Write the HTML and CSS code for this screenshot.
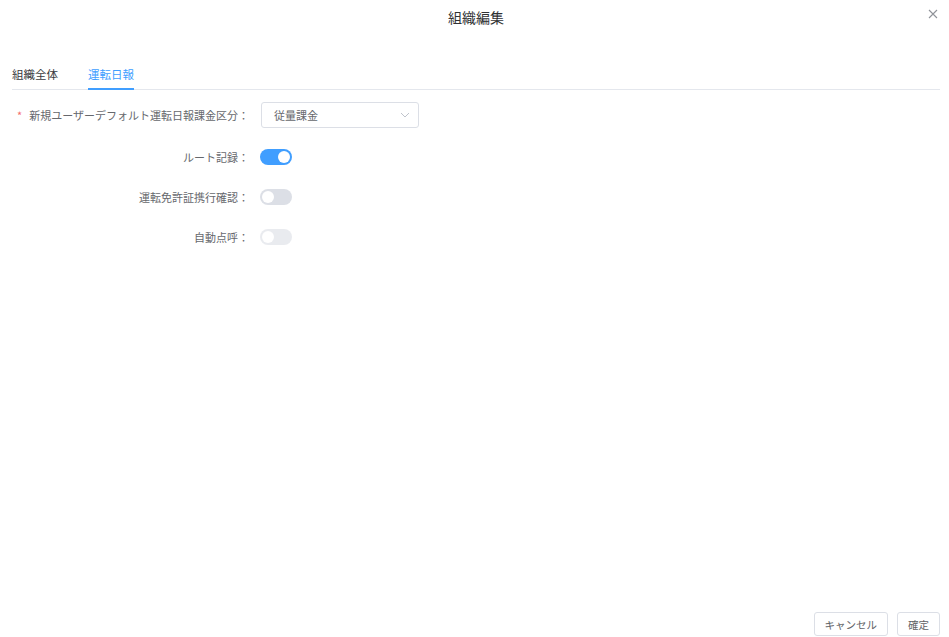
FILE: index.html
```html
<!DOCTYPE html>
<html lang="ja">
<head>
  <meta charset="UTF-8">
  <meta name="viewport" content="width=device-width, initial-scale=1.0">
  <title>組織編集</title>
  <link rel="stylesheet" href="styles.css">
</head>
<body>
  <div class="dialog">
    <header class="dialog-header">
      <span class="dialog-title">組織編集</span>
      <button class="dialog-close" type="button" aria-label="close">
        <svg width="10" height="10" viewBox="0 0 10 10"><path d="M1 1L9 9M9 1L1 9" stroke="#909399" stroke-width="1.1" fill="none"/></svg>
      </button>
    </header>

    <div class="dialog-body">
      <div class="tabs">
        <div class="tab">組織全体</div>
        <div class="tab active">運転日報</div>
      </div>

      <form class="form">
        <div class="form-item form-item-select">
          <label class="form-label"><span class="required">*</span>新規ユーザーデフォルト運転日報課金区分：</label>
          <div class="select">
            <span>従量課金</span>
            <svg width="10" height="6" viewBox="0 0 10 6"><path d="M1 1L5 5L9 1" stroke="#c0c4cc" stroke-width="1" fill="none"/></svg>
          </div>
        </div>
        <div class="form-item">
          <label class="form-label">ルート記録：</label>
          <span class="switch on"></span>
        </div>
        <div class="form-item">
          <label class="form-label">運転免許証携行確認：</label>
          <span class="switch"></span>
        </div>
        <div class="form-item">
          <label class="form-label">自動点呼：</label>
          <span class="switch disabled"></span>
        </div>
      </form>
    </div>

    <footer class="dialog-footer">
      <button class="btn" type="button">キャンセル</button>
      <button class="btn" type="button">確定</button>
    </footer>
  </div>
</body>
</html>
```

FILE: styles.css
```css
body {
  margin: 0;
  padding: 0;
  background: #fff;
  font-family: "Noto Sans CJK JP", "Noto Sans", sans-serif;
  color: #606266;
}
.dialog {
  height: 637px;
  display: flex;
  flex-direction: column;
}
.dialog-header {
  height: 34px;
  position: relative;
  text-align: center;
}
.dialog-title {
  font-size: 14px;
  line-height: 34px;
  color: #303133;
  margin-left: 3px;
}
.dialog-close {
  position: absolute;
  top: 9px;
  right: 11px;
  padding: 0;
  border: 0;
  background: none;
  width: 10px;
  height: 10px;
  line-height: 0;
}
.dialog-body {
  padding: 0 9px 0 12px;
}
.tabs {
  margin-top: 25px;
  display: flex;
  border-bottom: 1px solid #e4e7ed;
}
.tab {
  position: relative;
  height: 30px;
  line-height: 30px;
  font-size: 11.5px;
  color: #3a3b3e;
  margin-right: 30px;
}
.tab.active {
  color: #409eff;
}
.tab.active::after {
  content: "";
  position: absolute;
  left: 0;
  right: 0;
  bottom: -1px;
  height: 2px;
  background: #409eff;
}
.form {
  padding-top: 12px;
}
.form-item {
  display: flex;
  align-items: center;
  height: 24px;
  margin-bottom: 16px;
}
.form-item-select {
  height: 26px;
  margin-bottom: 17px;
}
.form-label {
  width: 248px;
  box-sizing: border-box;
  padding-right: 11px;
  text-align: right;
  font-size: 11px;
  color: #66686d;
}
.required {
  color: #f56c6c;
  margin-right: 7px;
}
.select {
  width: 158px;
  height: 26px;
  margin-left: 1px;
  box-sizing: border-box;
  border: 1px solid #dcdfe6;
  border-radius: 3px;
  padding: 0 8px 0 12px;
  display: flex;
  align-items: center;
  justify-content: space-between;
  font-size: 11px;
  color: #66686d;
}
.switch {
  position: relative;
  width: 32px;
  height: 16px;
  border-radius: 8px;
  background: #dcdfe6;
}
.switch::after {
  content: "";
  position: absolute;
  top: 2px;
  left: 2px;
  width: 12px;
  height: 12px;
  border-radius: 50%;
  background: #fff;
}
.switch.on {
  background: #409eff;
}
.switch.on::after {
  left: 18px;
}
.switch.disabled {
  opacity: 0.6;
}
.dialog-footer {
  margin-top: auto;
  display: flex;
  justify-content: flex-end;
  gap: 9px;
  padding: 0 9px 1px 0;
}
.btn {
  height: 24px;
  padding: 0 10px;
  border: 1px solid #dcdfe6;
  border-radius: 3px;
  background: #fff;
  font-family: inherit;
  font-size: 10.5px;
  color: #606266;
}
```
